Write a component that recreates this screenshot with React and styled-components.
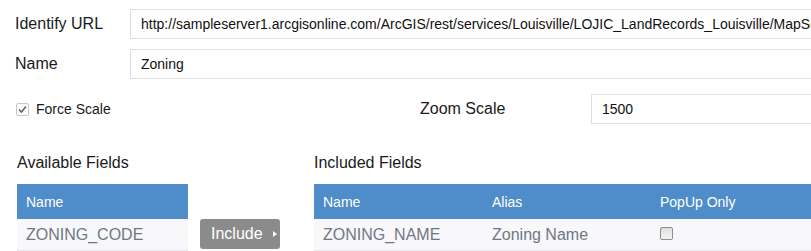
import React from 'react';
import styled, { createGlobalStyle } from 'styled-components';

const GlobalStyle = createGlobalStyle`
  html, body {
    margin: 0;
    padding: 0;
    background: #fff;
    font-family: "Liberation Sans", Arial, sans-serif;
    overflow: hidden;
  }
`;

const Page = styled.div`
  width: 811px;
  height: 251px;
  overflow: hidden;
  padding-top: 9px;
  box-sizing: border-box;
`;

const FormRow = styled.div`
  display: flex;
  align-items: center;
  height: 30px;
  margin-bottom: 10px;
`;

const Label = styled.label`
  width: 115px;
  padding-left: 15px;
  font-size: 16px;
  color: #1a1a1a;
  flex-shrink: 0;
`;

const TextBox = styled.div`
  box-sizing: border-box;
  height: 30px;
  width: ${(p) => p.width || '900px'};
  flex-shrink: 0;
  border: 1px solid #dcdde0;
  border-right: none;
  padding: 0 10px;
  font-size: 14px;
  line-height: 28px;
  color: #111;
  white-space: nowrap;
  overflow: hidden;
`;

const ScaleRow = styled.div`
  display: flex;
  align-items: center;
  height: 30px;
  margin-top: 15px;
`;

const ForceWrap = styled.label`
  display: flex;
  align-items: center;
  flex-shrink: 0;
  width: 405px;
  padding-left: 16px;
  box-sizing: border-box;
  font-size: 14px;
  color: #1a1a1a;
  gap: 7px;
`;

const Box = styled.span`
  width: 13px;
  height: 13px;
  box-sizing: border-box;
  border: 1px solid ${(p) => (p.checked ? '#c6c8cc' : '#8e8e8e')};
  border-radius: 2px;
  background: ${(p) => (p.checked ? '#fff' : 'linear-gradient(#dedede, #f4f4f4)')};
  display: inline-flex;
  align-items: center;
  justify-content: center;
`;

const ZoomLabel = styled.span`
  flex-shrink: 0;
  width: 186px;
  padding-left: 15px;
  box-sizing: border-box;
  font-size: 16px;
  color: #1a1a1a;
`;

const Sections = styled.div`
  display: flex;
  align-items: flex-start;
  margin-top: 28px;
`;

const Section = styled.div`
  flex-shrink: 0;
  margin-left: ${(p) => p.offset}px;
`;

const Heading = styled.div`
  font-size: 16px;
  color: #1a1a1a;
  height: 21px;
  line-height: 21px;
  margin-bottom: 11px;
`;

const Table = styled.table`
  border-collapse: collapse;
  width: ${(p) => p.width}px;
  table-layout: fixed;
`;

const Th = styled.th`
  background: #4f8dca;
  color: #fff;
  font-weight: normal;
  font-size: 14px;
  text-align: left;
  height: 35px;
  padding: 0 0 0 9px;
  width: ${(p) => (p.w ? `${p.w}px` : 'auto')};
`;

const Td = styled.td`
  background: #f8f8fa;
  color: #6f7784;
  font-size: 16px;
  height: 31px;
  padding: 0 0 0 9px;
  border-bottom: 1px solid #e6e7ea;
`;

const MiddleCol = styled.div`
  flex-shrink: 0;
  width: 126px;
  padding-left: 12px;
  box-sizing: border-box;
  padding-top: 67px;
`;

const IncludeButton = styled.button`
  width: 80px;
  height: 30px;
  border: none;
  border-radius: 3px;
  background: #8b8b8b;
  color: #fff;
  font-family: "Liberation Sans", Arial, sans-serif;
  font-size: 16px;
  padding: 0 0 0 11px;
  display: flex;
  align-items: center;
  justify-content: flex-start;
  cursor: pointer;
`;

const Arrow = styled.span`
  width: 0;
  height: 0;
  border-top: 3px solid transparent;
  border-bottom: 3px solid transparent;
  border-left: 4px solid #fff;
  margin-left: 10px;
`;

const Check = () => (
  <svg width="11" height="11" viewBox="0 0 11 11">
    <path d="M2 5.5 L4.5 8 L9 2.5" fill="none" stroke="#5c6068" strokeWidth="1.6" />
  </svg>
);

export default function App() {
  return (
    <Page>
      <GlobalStyle />
      <FormRow>
        <Label>Identify URL</Label>
        <TextBox>
          http://sampleserver1.arcgisonline.com/ArcGIS/rest/services/Louisville/LOJIC_LandRecords_Louisville/MapServer
        </TextBox>
      </FormRow>
      <FormRow>
        <Label>Name</Label>
        <TextBox>Zoning</TextBox>
      </FormRow>
      <ScaleRow>
        <ForceWrap>
          <Box checked>
            <Check />
          </Box>
          Force Scale
        </ForceWrap>
        <ZoomLabel>Zoom Scale</ZoomLabel>
        <TextBox width="400px">1500</TextBox>
      </ScaleRow>
      <Sections>
        <Section offset={17}>
          <Heading>Available Fields</Heading>
          <Table width={171}>
            <thead>
              <tr>
                <Th>Name</Th>
              </tr>
            </thead>
            <tbody>
              <tr>
                <Td>ZONING_CODE</Td>
              </tr>
            </tbody>
          </Table>
        </Section>
        <MiddleCol>
          <IncludeButton>
            Include
            <Arrow />
          </IncludeButton>
        </MiddleCol>
        <Section offset={0}>
          <Heading>Included Fields</Heading>
          <Table width={600}>
            <thead>
              <tr>
                <Th w={160}>Name</Th>
                <Th w={159}>Alias</Th>
                <Th>PopUp Only</Th>
              </tr>
            </thead>
            <tbody>
              <tr>
                <Td>ZONING_NAME</Td>
                <Td>Zoning Name</Td>
                <Td>
                  <Box />
                </Td>
              </tr>
            </tbody>
          </Table>
        </Section>
      </Sections>
    </Page>
  );
}
